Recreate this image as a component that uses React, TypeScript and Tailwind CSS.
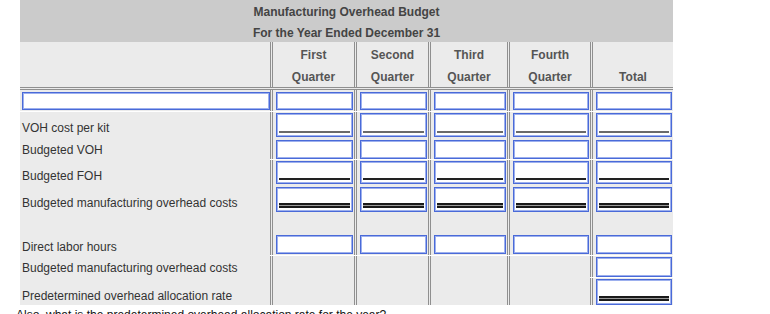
import type { ReactNode } from 'react';

type Line = 'none' | 'single' | 'singleDark' | 'double';

interface Column {
  key: string;
  top?: string;
  bottom: string;
  width: string;
  total?: boolean;
}

const columns: Column[] = [
  { key: 'q1', top: 'First', bottom: 'Quarter', width: 'w-[84px]' },
  { key: 'q2', top: 'Second', bottom: 'Quarter', width: 'w-[74px]' },
  { key: 'q3', top: 'Third', bottom: 'Quarter', width: 'w-[79px]' },
  { key: 'q4', top: 'Fourth', bottom: 'Quarter', width: 'w-[83px]' },
  { key: 'total', bottom: 'Total', width: 'w-[83px]', total: true },
];

// Entry box; accounting underlines sit inside the box at the bottom.
function Field({ h, line = 'none', className = '' }: { h: string; line?: Line; className?: string }) {
  return (
    <div
      className={`flex w-full flex-col justify-end border border-[#4a6ad8] bg-white px-[2px] pb-[3px] shadow-[inset_0_0_0_1px_#9db0ee] ${h} ${className}`}
    >
      {line === 'single' && <div className="h-[2px] bg-[#6a6a6a]" />}
      {line === 'singleDark' && <div className="h-[2px] bg-[#222]" />}
      {line === 'double' && <div className="h-[5px] border-y-2 border-[#1a1a1a] bg-[#9a9a9a]" />}
    </div>
  );
}

function Cell({ h, children }: { h: string; children?: ReactNode }) {
  return (
    <div className={`border-l-[3px] border-double border-[#8f8f8f] bg-[#ebebeb] pl-[3px] pr-[1px] ${h}`}>
      {children}
    </div>
  );
}

function DataColumn({ col }: { col: Column }) {
  return (
    <div className={`flex flex-col gap-px ${col.width}`}>
      <Cell h="h-[21px] pt-[2px]">
        <Field h="h-[18px]" />
      </Cell>
      <Cell h="h-[47px] pt-px">
        <Field h="h-[24px]" line="single" />
        <Field h="h-[19px]" className="mt-[3px]" />
      </Cell>
      <Cell h="h-[95px] pt-px">
        <Field h="h-[23px]" line="singleDark" />
        <Field h="h-[25px]" line="double" className="mt-[3px]" />
        <Field h="h-[19px]" className="mt-[23px]" />
      </Cell>
      {col.total ? (
        <>
          <Cell h="h-[21px] pt-px">
            <Field h="h-[20px]" />
          </Cell>
          <Cell h="h-[27px] pt-px">
            <Field h="h-[26px]" line="double" />
          </Cell>
        </>
      ) : (
        <Cell h="h-[49px]" />
      )}
    </div>
  );
}

const labels = [
  { text: 'VOH cost per kit', mt: 'mt-[8px]' },
  { text: 'Budgeted VOH', mt: 'mt-[6px]' },
  { text: 'Budgeted FOH', mt: 'mt-[10px]' },
  { text: 'Budgeted manufacturing overhead costs', mt: 'mt-[11px]' },
  { text: 'Direct labor hours', mt: 'mt-[28px]' },
  { text: 'Budgeted manufacturing overhead costs', mt: 'mt-[5px]' },
  { text: 'Predetermined overhead allocation rate', mt: 'mt-[12px]' },
];

export default function App() {
  return (
    <div className="h-[314px] w-[770px] overflow-hidden bg-white font-['Liberation_Sans',Arial,sans-serif] text-[12px]">
      <div className="ml-[20px] w-[653px]">
        {/* title band */}
        <div className="h-[42px] bg-[#cbcbcb] pt-[2px] text-center font-bold leading-[21px] text-[#444]">
          <div>Manufacturing Overhead Budget</div>
          <div>For the Year Ended December 31</div>
        </div>

        {/* column headings */}
        <div className="flex border-b-[3px] border-double border-[#8f8f8f] bg-[#ebebeb]">
          <div className="h-[45px] w-[250px]" />
          {columns.map((col) => (
            <div
              key={col.key}
              className={`h-[45px] border-l-[3px] border-double border-[#8f8f8f] pt-[2px] text-center font-bold leading-[22px] text-[#555] ${col.width}`}
            >
              <div className="h-[22px]">{col.top}</div>
              <div>{col.bottom}</div>
            </div>
          ))}
        </div>

        {/* body */}
        <div className="flex bg-white">
          <div className="flex w-[250px] flex-col gap-px">
            <div className="h-[21px] bg-[#ebebeb] pl-[2px] pt-[2px]">
              <Field h="h-[18px]" />
            </div>
            <div className="h-[193px] bg-[#ebebeb] pl-[2px] text-[#333]">
              {labels.map((l, i) => (
                <div key={i} className={`h-[16px] leading-[16px] ${l.mt}`}>
                  {l.text}
                </div>
              ))}
            </div>
          </div>
          {columns.map((col) => (
            <DataColumn key={col.key} col={col} />
          ))}
        </div>
      </div>

      <p className="mt-[3px] pl-[16px] leading-[14px] text-[#111]">
        Also, what is the predetermined overhead allocation rate for the year?
      </p>
    </div>
  );
}
